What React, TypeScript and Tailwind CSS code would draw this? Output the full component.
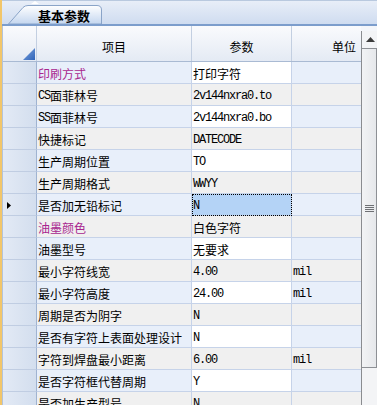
import React from "react";

type Row = { label: string; value: string; unit?: string; purple?: boolean; selected?: boolean };

const rows: Row[] = [
  { label: "印刷方式", value: "打印字符", purple: true },
  { label: "CS面菲林号", value: "2v144nxra0.to" },
  { label: "SS面菲林号", value: "2v144nxra0.bo" },
  { label: "快捷标记", value: "DATECODE" },
  { label: "生产周期位置", value: "TO" },
  { label: "生产周期格式", value: "WWYY" },
  { label: "是否加无铅标记", value: "N", selected: true },
  { label: "油墨颜色", value: "白色字符", purple: true },
  { label: "油墨型号", value: "无要求" },
  { label: "最小字符线宽", value: "4.00", unit: "mil" },
  { label: "最小字符高度", value: "24.00", unit: "mil" },
  { label: "周期是否为阴字", value: "N" },
  { label: "是否有字符上表面处理设计", value: "N" },
  { label: "字符到焊盘最小距离", value: "6.00", unit: "mil" },
  { label: "是否字符框代替周期", value: "Y" },
  { label: "是否加生产型号", value: "N" },
];

function Txt({ s }: { s: string }) {
  const parts = s.split(/([A-Za-z0-9.]+)/).filter((p) => p.length > 0);
  return (
    <>
      {parts.map((p, i) =>
        /^[A-Za-z0-9.]+$/.test(p) ? (
          <span key={i} className="font-['Liberation_Mono',monospace] text-[12px] tracking-[-1.2px]">
            {p}
          </span>
        ) : (
          <span key={i}>{p}</span>
        )
      )}
    </>
  );
}

export default function App() {
  return (
    <div className="w-[377px] h-[405px] overflow-hidden flex bg-white font-['Noto_Sans_CJK_SC',sans-serif] text-[12px] text-black">
      <div className="w-[2px] shrink-0 bg-[#f2c66a]" />
      <div className="flex-1 flex flex-col min-w-0">
        {/* tab strip */}
        <div className="relative h-[26px] shrink-0 flex items-end border-t border-[#b9c9df] border-b-2 border-b-[#7c9dcc] bg-linear-to-b from-[#e8eef8] to-[#cfdcf0]">
          <div className="absolute left-[29px] top-0 w-0 h-0 border-l-[4px] border-r-[4px] border-b-[3px] border-l-transparent border-r-transparent border-b-white" />
          <div className="ml-[6px] relative w-[94px] h-[19px] flex items-center pl-[30px] pt-[1px]">
            <svg className="absolute inset-0" width="94" height="19" viewBox="0 0 94 19">
              <defs>
                <linearGradient id="tabg" x1="0" y1="0" x2="0" y2="1">
                  <stop offset="0" stopColor="#ffffff" />
                  <stop offset="1" stopColor="#c4d6ef" />
                </linearGradient>
              </defs>
              <path d="M0.5 19 L15 2.5 Q17 0.5 20 0.5 L89 0.5 Q93.5 0.5 93.5 5 L93.5 19 Z" fill="url(#tabg)" stroke="#8aa4c8" strokeWidth="1" />
            </svg>
            <span className="relative font-bold text-[13px] leading-none tracking-[0px]">基本参数</span>
          </div>
        </div>
        {/* grid */}
        <div className="flex-1 flex min-h-0">
          <div className="w-[1px] shrink-0 bg-[#b3c3da]" />
          <div className="flex-1 flex flex-col min-w-0">
            <div className="flex h-[36px] shrink-0 border-b border-[#a9bad3] bg-linear-to-b from-[#fafbfd] to-[#e4eaf4]">
              <div className="w-[34px] shrink-0 border-r border-[#c3cfe1] flex items-end justify-end pr-[1px] pb-[1px]">
                <svg width="12" height="12" viewBox="0 0 12 12">
                  <defs>
                    <linearGradient id="tri" x1="0" y1="0" x2="1" y2="1">
                      <stop offset="0" stopColor="#7fa6e0" />
                      <stop offset="1" stopColor="#2f63b8" />
                    </linearGradient>
                  </defs>
                  <path d="M12 0 L12 12 L0 12 Z" fill="url(#tri)" />
                </svg>
              </div>
              <div className="w-[155px] shrink-0 border-r border-[#c3cfe1] flex items-center justify-center pt-[6px]">项目</div>
              <div className="w-[100px] shrink-0 border-r border-[#c3cfe1] flex items-center justify-center pt-[6px]">参数</div>
              <div className="flex-1 flex items-center justify-end pr-[5px] pt-[6px]">单位</div>
            </div>
            {rows.map((r, i) => {
              const alt = i % 2 === 1;
              const side = alt ? "bg-[#f0f0f0]" : "bg-[#e8effa]";
              const val = r.selected ? "bg-[#b4d3f6] outline-1 outline-dotted outline-black -outline-offset-1" : alt ? "bg-[#f0f0f0]" : "bg-white";
              return (
                <div key={i} className="flex h-[22px] shrink-0">
                  <div className="w-[34px] shrink-0 bg-linear-to-r from-[#e3eaf5] to-[#d3deee] border-r border-[#9fb3d1] border-b border-b-[#c0cde2] flex items-center pl-[4px] pt-[1px]">
                    {r.selected && (
                      <svg width="4" height="7" viewBox="0 0 4 7">
                        <path d="M0 0 L4 3.5 L0 7 Z" fill="#000" />
                      </svg>
                    )}
                  </div>
                  <div className={`w-[155px] shrink-0 ${side} border-r border-b border-[#c6d3e9] flex items-center pl-[1px] pt-[2px] whitespace-nowrap ${r.purple ? "text-[#a8268f]" : ""}`}>
                    <Txt s={r.label} />
                  </div>
                  <div className={`w-[100px] shrink-0 ${val} border-r border-b border-[#c6d3e9] flex items-center pl-[1px] pt-[2px] whitespace-nowrap`}>
                    <Txt s={r.value} />
                  </div>
                  <div className={`flex-1 ${side} border-b border-[#c6d3e9] flex items-center pl-[1px] pt-[2px] whitespace-nowrap`}>
                    {r.unit && <Txt s={r.unit} />}
                  </div>
                </div>
              );
            })}
          </div>
          {/* scrollbar */}
          <div className="w-[16px] shrink-0 flex flex-col">
            <div className="h-[5px] shrink-0 bg-[#f4f6fa]" />
            <div className="flex-1 flex flex-col border-l border-[#8a8c90] bg-[#f3f4f6]">
              <div className="h-[17px] shrink-0 flex items-center justify-center pl-[1px]">
                <svg width="9" height="5" viewBox="0 0 9 5">
                  <path d="M4.5 0 L9 5 L0 5 Z" fill="#3c3c3c" />
                </svg>
              </div>
              <div className="h-[320px] shrink-0 border-t border-r border-b border-[#8d9095] bg-linear-to-r from-[#f2f3f5] to-[#e6e8eb] flex items-center justify-center">
                <div className="flex flex-col gap-[1px] w-[9px]">
                  <div className="h-[1px] bg-[#6e7074]" />
                  <div className="h-[1px] bg-[#6e7074]" />
                  <div className="h-[1px] bg-[#6e7074]" />
                  <div className="h-[1px] bg-[#6e7074]" />
                </div>
              </div>
              <div className="flex-1" />
            </div>
          </div>
        </div>
      </div>
    </div>
  );
}
